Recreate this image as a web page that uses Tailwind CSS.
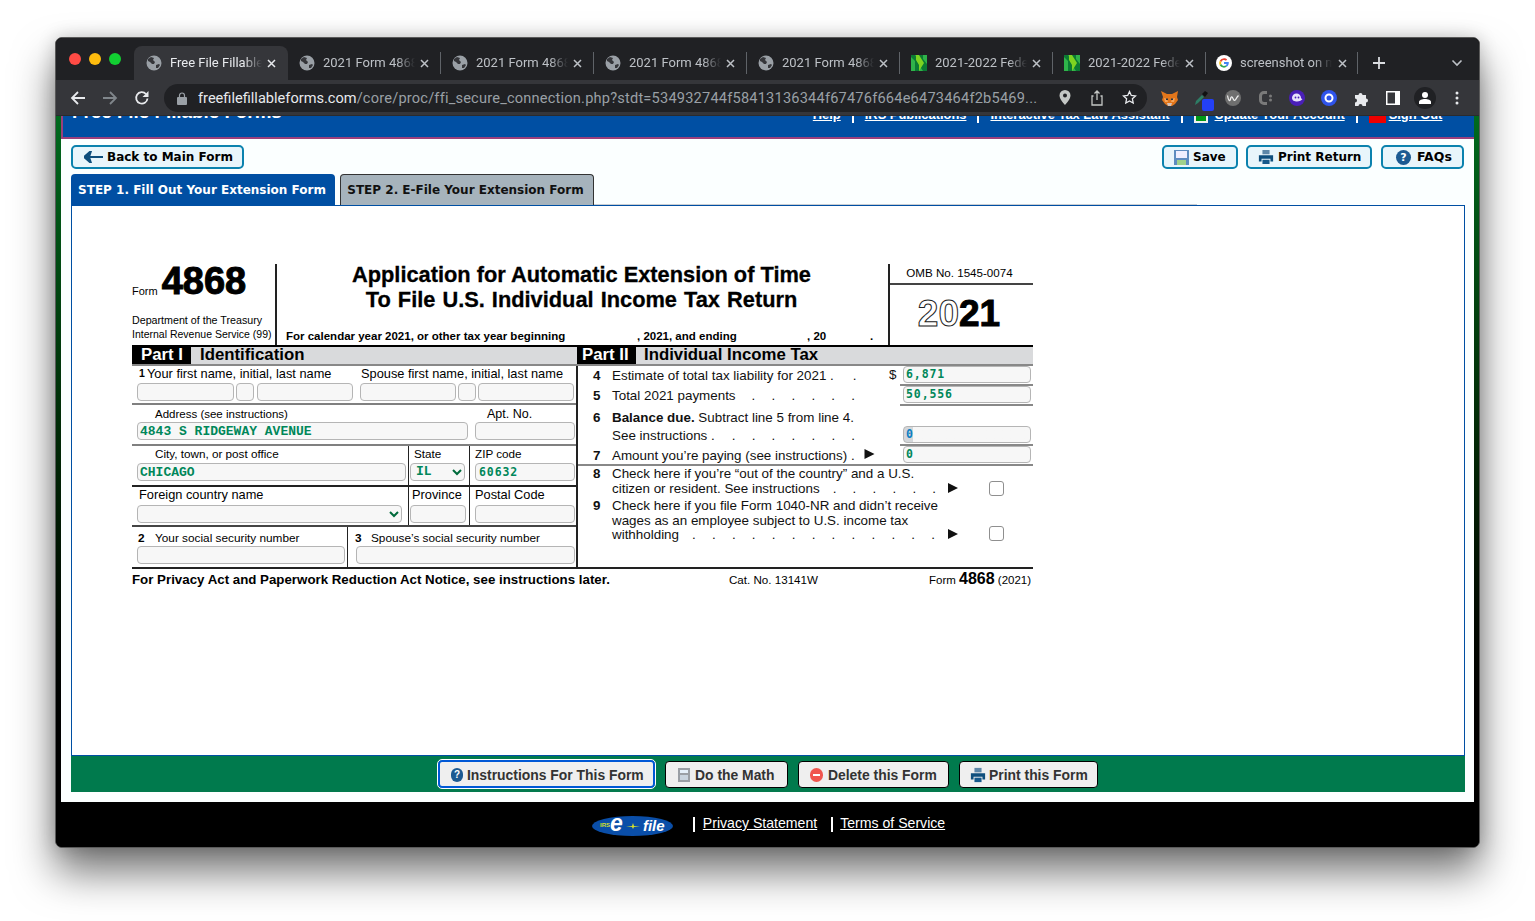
<!DOCTYPE html>
<html lang="en">
  <head>
    <meta charset="UTF-8" />
    <title>Free File Fillable Forms</title>
    <script src="https://cdn.jsdelivr.net/npm/@tailwindcss/browser@4"></script>
  </head>
  <body class="bg-white w-[1535px] h-[921px] overflow-hidden pt-[37px] pl-[55px] font-['Liberation_Sans',Arial,sans-serif] text-black">
    <svg class="hidden">
      <symbol id="globe" viewBox="0 0 16 16">
        <circle cx="8" cy="8" r="7.5" fill="#9aa0a6" />
        <path d="M2 4l3-2 3 1-1 2 2 2-1 2H6L4 7 2 6zM10 10l3-1 1 1-2 3-2 0z" fill="#35363a" />
      </symbol>
      <symbol id="nerd" viewBox="0 0 16 16">
        <rect width="16" height="16" fill="#2fb34a" />
        <path d="M0 0h4l4 6v10H4V6L0 2zM8 0h4v4l4 5v7h-4L8 10z" fill="#0b7a33" />
        <path d="M5 0h3l5 8-5 8V10L5 5z" fill="#7ed321" />
      </symbol>
      <symbol id="printer" viewBox="0 0 18 18">
        <path d="M5 1h8v5H5z" fill="#5d87a8" />
        <path d="M1 7h16v7h-3v-3H4v3H1z" fill="#0f4f7d" />
        <path d="M5 12h8v5H5z" fill="#15598c" />
      </symbol>
      <symbol id="close" viewBox="0 0 9 9">
        <path d="M1 1l7 7M8 1l-7 7" stroke="currentColor" stroke-width="1.500" />
      </symbol>
    </svg>

    <div class="w-[1425px] h-[811px] flex flex-col rounded-[7px] overflow-hidden border border-[#5a5a5a] bg-black shadow-[0_24px_42px_rgba(0,0,0,0.55),0_0_18px_rgba(0,0,0,0.18)]">
      <!-- tab strip -->
      <div class="h-[42px] shrink-0 bg-[#202124] flex items-end text-[13px] text-[#bdc1c6] font-['Roboto',sans-serif]">
        <div class="w-[78px] h-full flex items-start gap-[8px] pl-[13px] pt-[15px]">
          <span class="w-[12px] h-[12px] rounded-full bg-[#ff4b45]"></span>
          <span class="w-[12px] h-[12px] rounded-full bg-[#febc0e]"></span>
          <span class="w-[12px] h-[12px] rounded-full bg-[#12cf32]"></span>
        </div>
        <div class="w-[154px] h-[34px] bg-[#35363a] rounded-t-[8px] flex items-center pl-[12px] text-[#e8eaed]">
          <svg class="w-[16px] h-[16px] shrink-0"><use href="#globe" /></svg>
          <span class="ml-[8px] w-[92px] overflow-hidden whitespace-nowrap [mask-image:linear-gradient(to_right,black_80%,transparent)]">Free File Fillable Forms</span>
          <svg class="ml-[5px] w-[9px] h-[9px]"><use href="#close" /></svg>
        </div>
        <div class="w-[153px] h-[34px] flex items-center pl-[11px] border-r border-[#5f6368] [border-image:linear-gradient(to_bottom,transparent_20%,#5f6368_20%,#5f6368_80%,transparent_80%)_1]">
          <svg class="w-[16px] h-[16px] shrink-0"><use href="#globe" /></svg>
          <span class="ml-[8px] w-[92px] overflow-hidden whitespace-nowrap [mask-image:linear-gradient(to_right,black_80%,transparent)]">2021 Form 4868 Extension</span>
          <svg class="ml-[5px] w-[9px] h-[9px]"><use href="#close" /></svg>
        </div>
        <div class="w-[153px] h-[34px] flex items-center pl-[11px] border-r border-[#5f6368] [border-image:linear-gradient(to_bottom,transparent_20%,#5f6368_20%,#5f6368_80%,transparent_80%)_1]">
          <svg class="w-[16px] h-[16px] shrink-0"><use href="#globe" /></svg>
          <span class="ml-[8px] w-[92px] overflow-hidden whitespace-nowrap [mask-image:linear-gradient(to_right,black_80%,transparent)]">2021 Form 4868 Extension</span>
          <svg class="ml-[5px] w-[9px] h-[9px]"><use href="#close" /></svg>
        </div>
        <div class="w-[153px] h-[34px] flex items-center pl-[11px] border-r border-[#5f6368] [border-image:linear-gradient(to_bottom,transparent_20%,#5f6368_20%,#5f6368_80%,transparent_80%)_1]">
          <svg class="w-[16px] h-[16px] shrink-0"><use href="#globe" /></svg>
          <span class="ml-[8px] w-[92px] overflow-hidden whitespace-nowrap [mask-image:linear-gradient(to_right,black_80%,transparent)]">2021 Form 4868 Extension</span>
          <svg class="ml-[5px] w-[9px] h-[9px]"><use href="#close" /></svg>
        </div>
        <div class="w-[153px] h-[34px] flex items-center pl-[11px] border-r border-[#5f6368] [border-image:linear-gradient(to_bottom,transparent_20%,#5f6368_20%,#5f6368_80%,transparent_80%)_1]">
          <svg class="w-[16px] h-[16px] shrink-0"><use href="#globe" /></svg>
          <span class="ml-[8px] w-[92px] overflow-hidden whitespace-nowrap [mask-image:linear-gradient(to_right,black_80%,transparent)]">2021 Form 4868 Extension</span>
          <svg class="ml-[5px] w-[9px] h-[9px]"><use href="#close" /></svg>
        </div>
        <div class="w-[153px] h-[34px] flex items-center pl-[11px] border-r border-[#5f6368] [border-image:linear-gradient(to_bottom,transparent_20%,#5f6368_20%,#5f6368_80%,transparent_80%)_1]">
          <svg class="w-[16px] h-[16px] shrink-0"><use href="#nerd" /></svg>
          <span class="ml-[8px] w-[92px] overflow-hidden whitespace-nowrap [mask-image:linear-gradient(to_right,black_80%,transparent)]">2021-2022 Federal Tax</span>
          <svg class="ml-[5px] w-[9px] h-[9px]"><use href="#close" /></svg>
        </div>
        <div class="w-[153px] h-[34px] flex items-center pl-[11px] border-r border-[#5f6368] [border-image:linear-gradient(to_bottom,transparent_20%,#5f6368_20%,#5f6368_80%,transparent_80%)_1]">
          <svg class="w-[16px] h-[16px] shrink-0"><use href="#nerd" /></svg>
          <span class="ml-[8px] w-[92px] overflow-hidden whitespace-nowrap [mask-image:linear-gradient(to_right,black_80%,transparent)]">2021-2022 Federal Tax</span>
          <svg class="ml-[5px] w-[9px] h-[9px]"><use href="#close" /></svg>
        </div>
        <div class="w-[152px] h-[34px] flex items-center pl-[10px] border-r border-[#5f6368] [border-image:linear-gradient(to_bottom,transparent_20%,#5f6368_20%,#5f6368_80%,transparent_80%)_1]">
          <svg class="w-[16px] h-[16px] shrink-0" viewBox="0 0 16 16">
            <circle cx="8" cy="8" r="8" fill="#fff" />
            <path d="M8 3.200c1.300 0 2.400.5 3.200 1.300l-1.300 1.300A2.800 2.800 0 0 0 5.300 7L3.700 5.800A4.900 4.900 0 0 1 8 3.200z" fill="#ea4335" />
            <path d="M3.700 5.800 5.300 7a2.800 2.800 0 0 0 0 2L3.700 10.200a4.900 4.900 0 0 1 0-4.400z" fill="#fbbc05" />
            <path d="M3.700 10.200 5.300 9a2.800 2.800 0 0 0 4.200 1.400l1.500 1.200A4.900 4.900 0 0 1 3.700 10.200z" fill="#34a853" />
            <path d="M12.800 8c0-.3 0-.6-.1-.9H8v1.900h2.700c-.1.6-.5 1.100-1.200 1.400l1.500 1.200c.9-.8 1.800-2.100 1.800-3.600z" fill="#4285f4" />
          </svg>
          <span class="ml-[8px] w-[92px] overflow-hidden whitespace-nowrap [mask-image:linear-gradient(to_right,black_80%,transparent)]">screenshot on mac</span>
          <svg class="ml-[6px] w-[9px] h-[9px]"><use href="#close" /></svg>
        </div>
        <div class="flex-1 h-[34px] flex items-center justify-between pl-[15px] pr-[16px]">
          <svg class="w-[12px] h-[12px]" viewBox="0 0 12 12"><path d="M6 0v12M0 6h12" stroke="#dadce0" stroke-width="1.800" /></svg>
          <svg class="w-[12px] h-[8px]" viewBox="0 0 12 8"><path d="M1.500 1.500 6 6l4.500-4.500" stroke="#bdc1c6" stroke-width="1.600" fill="none" /></svg>
        </div>
      </div>

      <!-- toolbar -->
      <div class="h-[36px] shrink-0 bg-[#35363a] border-b border-[#2a2b2e] flex items-center pl-[6px] pt-[1px] text-[#9aa0a6]">
        <div class="w-[32px] flex justify-center">
          <svg class="w-[16px] h-[16px]" viewBox="0 0 16 16"><path d="M15 8H2M8 2 2 8l6 6" stroke="#e8eaed" stroke-width="1.800" fill="none" /></svg>
        </div>
        <div class="w-[32px] flex justify-center">
          <svg class="w-[16px] h-[16px]" viewBox="0 0 16 16"><path d="M1 8h13M8 2l6 6-6 6" stroke="#80868b" stroke-width="1.800" fill="none" /></svg>
        </div>
        <div class="w-[32px] flex justify-center">
          <svg class="w-[16px] h-[16px]" viewBox="0 0 16 16"><path d="M13.500 8.500A5.700 5.700 0 1 1 12 4" stroke="#e8eaed" stroke-width="1.800" fill="none" /><path d="M14.500 1v6h-6z" fill="#e8eaed" /></svg>
        </div>
        <div class="ml-[6px] w-[983px] h-[28px] rounded-full bg-[#202124] flex items-center pl-[13px] pr-[2px]">
          <svg class="w-[10px] h-[13px] shrink-0" viewBox="0 0 10 13"><path d="M2.500 5V3.500a2.500 2.500 0 0 1 5 0V5" stroke="#9aa0a6" stroke-width="1.200" fill="none" /><rect y="5" width="10" height="8" rx="1" fill="#9aa0a6" /></svg>
          <div class="ml-[11px] w-[845px] pt-[2px] whitespace-nowrap overflow-hidden text-[14.600px] tracking-[0.2px] font-['Roboto',sans-serif] text-[#9aa0a6]"><span class="text-[#e8eaed] tracking-normal">freefilefillableforms.com</span>/core/proc/ffi_secure_connection.php?stdt=534932744f58413136344f67476f664e6473464f2b5469...</div>
          <div class="ml-auto flex">
            <div class="w-[32px] flex justify-center">
              <svg class="w-[12px] h-[15px]" viewBox="0 0 12 15"><path fill-rule="evenodd" d="M6 0a5.500 5.500 0 0 1 5.500 5.500C11.500 9.500 6 15 6 15S.5 9.500.5 5.500A5.500 5.500 0 0 1 6 0zm0 3.500a2 2 0 1 0 0 4 2 2 0 0 0 0-4z" fill="#c4c7c5" /></svg>
            </div>
            <div class="w-[32px] flex justify-center">
              <svg class="w-[14px] h-[16px]" viewBox="0 0 14 16"><path d="M3.500 6H2v9h10V6h-1.500M7 10V1M4.500 3.500 7 1l2.500 2.500" stroke="#c4c7c5" stroke-width="1.300" fill="none" /></svg>
            </div>
            <div class="w-[32px] flex justify-center">
              <svg class="w-[15px] h-[15px]" viewBox="0 0 15 15"><path d="m7.500 1.500 1.800 3.900 4.200.5-3.100 2.900.8 4.200-3.700-2.100-3.700 2.100.8-4.200L1.500 5.900l4.200-.5z" stroke="#e8eaed" stroke-width="1.300" fill="none" /></svg>
            </div>
          </div>
        </div>
        <div class="ml-[6px] flex items-center">
          <div class="w-[32px] flex justify-center">
            <svg class="w-[17px] h-[16px]" viewBox="0 0 17 16">
              <path d="M0 1l6 3h5l6-3-1 6 1 3-3 4-3 2H7l-3-2-3-4 1-3z" fill="#e2761b" />
              <path d="M3 8l3 1 1 3-3 0zM14 8l-3 1-1 3 3 0z" fill="#f6a55a" />
              <path d="M6 13h5l-1 3H7z" fill="#d7c1b3" />
              <path d="M5 8.500h2v1.500H5zM10 8.500h2v1.500h-2z" fill="#233447" />
            </svg>
          </div>
          <div class="w-[32px] flex justify-center relative">
            <svg class="w-[16px] h-[16px]" viewBox="0 0 16 16"><path d="M2 15l1-4 6-6 2 2-6 6z" fill="#2d7d65" /><path d="M9 4l3-3 3 2-3 4z" fill="#111" /></svg>
            <span class="absolute left-[17px] top-[9px] w-[12px] h-[12px] rounded-[2px] bg-[#2440f5]"></span>
          </div>
          <div class="w-[32px] flex justify-center">
            <svg class="w-[16px] h-[16px]" viewBox="0 0 16 16"><circle cx="8" cy="8" r="8" fill="#6f6f6f" /><path d="M2.500 5.500c1 6 2.500 6 3 3.500s1.500-3 2.500-.5 2 2.500 3 .5 1.500-2.500 2.500-3.500" stroke="#eee" stroke-width="1.300" fill="none" /></svg>
          </div>
          <div class="w-[32px] flex justify-center">
            <svg class="w-[14px] h-[16px]" viewBox="0 0 14 16"><path d="M9 2.500H6a3.500 3.500 0 0 0-3.500 3.500v4A3.500 3.500 0 0 0 6 13.500h3" stroke="#7a7a7a" stroke-width="3" fill="none" /><circle cx="12.500" cy="6" r="1.500" fill="#7a7a7a" /><circle cx="12.500" cy="10" r="1.500" fill="#7a7a7a" /></svg>
          </div>
          <div class="w-[32px] flex justify-center">
            <svg class="w-[16px] h-[16px]" viewBox="0 0 16 16"><circle cx="8" cy="8" r="8" fill="#4a1fb8" /><path d="M3 8a4.500 4.500 0 0 1 9 0c0 .6 1.500 1 1.500 1-1 1.500-3 2.500-5.500 2.500S3 10.500 3 8z" fill="#e8e3fb" /><circle cx="6.500" cy="7.500" r=".9" fill="#4a1fb8" /><circle cx="9.500" cy="7.500" r=".9" fill="#4a1fb8" /></svg>
          </div>
          <div class="w-[32px] flex justify-center">
            <svg class="w-[16px] h-[16px]" viewBox="0 0 16 16"><circle cx="8" cy="8" r="8" fill="#2f54eb" /><circle cx="8" cy="8" r="3.500" fill="none" stroke="#fff" stroke-width="2" /></svg>
          </div>
          <div class="w-[32px] flex justify-center">
            <svg class="w-[15px] h-[15px]" viewBox="0 0 15 15"><path d="M1 4h3.500a2 2 0 1 1 4 0H12v3.500a2 2 0 1 1 0 4V15H8.500a2 2 0 1 0-4 0H1v-3.500a2 2 0 1 0 0-4z" fill="#e8eaed" /></svg>
          </div>
          <div class="w-[32px] flex justify-center">
            <svg class="w-[14px] h-[14px]" viewBox="0 0 14 14"><path fill-rule="evenodd" d="M0 0h14v14H0zM1.500 1.500v11H9v-11z" fill="#fff" /><path d="M9 1h4v12H9z" fill="#fff" /></svg>
          </div>
          <div class="w-[32px] flex justify-center">
            <span class="w-[22px] h-[22px] rounded-full bg-[#202124] flex items-center justify-center">
              <svg class="w-[12px] h-[12px]" viewBox="0 0 12 12"><circle cx="6" cy="3" r="3" fill="#fff" /><path d="M0 12V10c0-2 3-3 6-3s6 1 6 3v2z" fill="#fff" /></svg>
            </span>
          </div>
          <div class="w-[32px] flex justify-center">
            <svg class="w-[4px] h-[14px]" viewBox="0 0 4 14"><circle cx="2" cy="2" r="1.500" fill="#e8eaed" /><circle cx="2" cy="7" r="1.500" fill="#e8eaed" /><circle cx="2" cy="12" r="1.500" fill="#e8eaed" /></svg>
          </div>
        </div>
      </div>

      <!-- page -->
      <div class="flex-1 min-h-0 flex flex-col bg-linear-to-b from-[#006a1e] to-black to-95%">
        <div class="mx-[5px] h-[686px] shrink-0 bg-[#fbffff] flex flex-col">
          <!-- clipped site banner -->
          <div class="h-[23px] shrink-0 overflow-hidden bg-[#004fa3] border-b-2 border-l-2 border-[#9b3f7c] flex items-end pb-[14px] pl-[9px] text-white">
            <span class="text-[18.800px] leading-[22px] font-bold whitespace-nowrap">Free File Fillable Forms</span>
            <div class="ml-[531px] flex items-end text-[12.900px] leading-[16px] font-bold gap-[11px] whitespace-nowrap">
              <span class="underline">Help</span>
              <span class="w-[2px] h-[14px] bg-white"></span>
              <span class="underline">IRS Publications</span>
              <span class="w-[2px] h-[14px] bg-white"></span>
              <span class="underline">Interactive Tax Law Assistant</span>
              <span class="w-[2px] h-[14px] bg-white"></span>
              <span class="w-[14px] h-[14px] bg-[#009a17] border-2 border-[#eee] -mr-[4px]"></span>
              <span class="underline">Update Your Account</span>
              <span class="w-[2px] h-[14px] bg-white"></span>
              <span class="w-[17px] h-[14px] bg-[#ee0000] -mr-[8px]"></span>
              <span class="underline">Sign Out</span>
            </div>
          </div>

          <!-- action buttons -->
          <div class="h-[24px] mt-[6px] shrink-0 flex px-[10px] font-['DejaVu_Sans',Verdana,sans-serif] font-bold text-[12px]">
            <div class="w-[173px] flex items-center rounded-[5px] border-2 border-[#0b82ae] bg-[#e8f5fb] pl-[11px] gap-[4px]">
              <svg class="w-[19px] h-[12px]" viewBox="0 0 19 12"><path d="M19 6H6M7 0 0 6l7 6 -2-6z" stroke="#0f4f7d" stroke-width="2" fill="#0f4f7d" /></svg>
              <span>Back to Main Form</span>
            </div>
            <div class="ml-auto w-[76px] flex items-center rounded-[5px] border-2 border-[#0b82ae] bg-[#e8f5fb] pl-[10px] gap-[4px]">
              <svg class="w-[15px] h-[15px]" viewBox="0 0 15 15"><rect width="15" height="15" fill="#5d8cc0" /><rect x="2" y="1" width="11" height="7" fill="#eef" /><rect x="3" y="10" width="9" height="5" fill="#9fd18b" /></svg>
              <span>Save</span>
            </div>
            <div class="ml-[8px] w-[126px] flex items-center rounded-[5px] border-2 border-[#0b82ae] bg-[#e8f5fb] pl-[10px] gap-[4px]">
              <svg class="w-[16px] h-[16px]"><use href="#printer" /></svg>
              <span>Print Return</span>
            </div>
            <div class="ml-[9px] w-[83px] flex items-center rounded-[5px] border-2 border-[#0b82ae] bg-[#e8f5fb] pl-[13px] gap-[6px]">
              <span class="w-[15px] h-[15px] rounded-full bg-[#1c5a92] text-white text-[11px] leading-[15px] text-center">?</span>
              <span class="text-[12.500px]">FAQs</span>
            </div>
          </div>

          <!-- step tabs -->
          <div class="h-[31px] mt-[5px] shrink-0 flex pl-[10px] font-['DejaVu_Sans',Verdana,sans-serif] font-bold text-[12px] whitespace-nowrap">
            <div class="w-[264px] rounded-t-[4px] bg-[#004fa3] text-white flex items-center justify-center pr-[2px]">STEP 1. Fill Out Your Extension Form</div>
            <div class="ml-[5px] w-[254px] rounded-t-[4px] bg-[#a6b3bc] text-[#111] border border-b-0 border-[#333] flex items-center justify-center pr-[3px]">STEP 2. E-File Your Extension Form</div>
            <div class="w-[603px] h-[1px] self-end bg-[#c9ced3]"></div>
          </div>

          <!-- form box -->
          <div class="ml-[10px] mr-[9px] h-[551px] shrink-0 border border-[#004fa3] bg-white pt-[58px] pl-[60px]">
            <div class="w-[901px]">
              <!-- form head -->
              <div class="h-[81px] flex">
                <div class="w-[145px] border-r-2 border-[#222] flex flex-col">
                  <div class="h-[34px] flex items-end">
                    <span class="text-[11px] leading-[13px]">Form</span>
                    <span class="ml-[4px] text-[38px] leading-[34px] font-bold [-webkit-text-stroke:1px_black]">4868</span>
                  </div>
                  <div class="mt-[15px] text-[10.700px] leading-[14px] whitespace-nowrap">Department of the Treasury<br /><span class="text-[10.500px]">Internal Revenue Service (99)</span></div>
                </div>
                <div class="flex-1 flex flex-col">
                  <div class="h-[67px] -mt-[2px] pr-[2px] text-center text-[21.800px] leading-[25px] font-bold [-webkit-text-stroke:0.3px_black]">Application for Automatic Extension of Time<br /><span class="[word-spacing:1px]">To File U.S. Individual Income Tax Return</span></div>
                  <div class="flex text-[11.500px] leading-[13px] font-bold pl-[9px] pt-[1px] whitespace-nowrap">
                    <span class="w-[351px]">For calendar year 2021, or other tax year beginning</span>
                    <span class="w-[170px]">, 2021, and ending</span>
                    <span class="w-[63px]">, 20</span>
                    <span>.</span>
                  </div>
                </div>
                <div class="w-[145px] border-l-2 border-[#222] flex flex-col">
                  <div class="h-[21px] border-b-2 border-[#444] text-[11.600px] leading-[17px] text-center pr-[4px] whitespace-nowrap">OMB No. 1545-0074</div>
                  <div class="flex-1 flex justify-center items-start pt-[10px] pr-[5px] text-[37px] leading-[38px] font-bold">
                    <span class="text-white [-webkit-text-stroke:1px_#222]">20</span><span class="[-webkit-text-stroke:1px_black]">21</span>
                  </div>
                </div>
              </div>

              <!-- part bars -->
              <div class="h-[21px] flex border-t-2 border-b-2 border-t-black border-b-[#888] bg-[#d9dadc] text-[16.800px] leading-[15px] font-bold">
                <div class="w-[59px] bg-black text-white text-center pl-[1px]">Part I</div>
                <div class="ml-[9px] w-[377px]">Identification</div>
                <div class="w-[59px] bg-black text-white pl-[5px] whitespace-nowrap">Part II</div>
                <div class="ml-[8px] whitespace-nowrap">Individual Income Tax</div>
              </div>

              <div class="flex h-[203px] border-b-2 border-[#222]">
                <!-- left column -->
                <div class="w-[446px] shrink-0 border-r-2 border-[#222] flex flex-col">
                  <div class="h-[39px] border-b-2 border-[#808080]">
                    <div class="flex h-[17px] pb-[2px] items-center text-[12.800px] leading-[15px] whitespace-nowrap">
                      <span class="w-[15px] pl-[7px] text-[10.500px] font-bold">1</span>
                      <span class="w-[214px]">Your first name, initial, last name</span>
                      <span>Spouse first name, initial, last name</span>
                    </div>
                    <div class="flex pl-[5px] h-[18px]">
                      <input class="w-[97px] h-[18px] rounded-[4px] border border-[#b5b5b5] bg-[#f7f7f7]" />
                      <input class="ml-[2px] w-[18px] h-[18px] rounded-[4px] border border-[#b5b5b5] bg-[#f7f7f7]" />
                      <input class="ml-[3px] w-[96px] h-[18px] rounded-[4px] border border-[#b5b5b5] bg-[#f7f7f7]" />
                      <input class="ml-[7px] w-[96px] h-[18px] rounded-[4px] border border-[#b5b5b5] bg-[#f7f7f7]" />
                      <input class="ml-[2px] w-[18px] h-[18px] rounded-[4px] border border-[#b5b5b5] bg-[#f7f7f7]" />
                      <input class="ml-[2px] w-[96px] h-[18px] rounded-[4px] border border-[#b5b5b5] bg-[#f7f7f7]" />
                    </div>
                  </div>
                  <div class="h-[41px] flex border-b-2 border-[#808080] text-[11.500px] leading-[14px]">
                    <div class="w-[343px] pl-[5px] pt-[2px]">
                      <div class="pl-[18px] h-[15px]">Address (see instructions)</div>
                      <input value="4843 S RIDGEWAY AVENUE" class="w-[331px] h-[18px] rounded-[4px] border border-[#b5b5b5] bg-[#f7f7f7] px-[2px] font-['Liberation_Mono',monospace] font-bold text-[13px] text-[#00875a]" />
                    </div>
                    <div class="pt-[2px]">
                      <div class="pl-[12px] h-[15px] text-[12.500px]">Apt. No.</div>
                      <input class="w-[100px] h-[18px] rounded-[4px] border border-[#b5b5b5] bg-[#f7f7f7]" />
                    </div>
                  </div>
                  <div class="h-[41px] flex border-b-2 border-[#222] text-[11.700px] leading-[14px]">
                    <div class="w-[276px] pl-[5px] pt-[1px]">
                      <div class="pl-[18px] h-[16px]">City, town, or post office</div>
                      <input value="CHICAGO" class="w-[269px] h-[18px] rounded-[4px] border border-[#b5b5b5] bg-[#f7f7f7] px-[2px] font-['Liberation_Mono',monospace] font-bold text-[13px] text-[#00875a]" />
                    </div>
                    <div class="w-[61px] border-l border-[#222] pt-[1px]">
                      <div class="pl-[5px] h-[16px]">State</div>
                      <div class="relative w-[55px] h-[18px] ml-[1px]">
                        <select class="appearance-none w-full h-full rounded-[4px] border border-[#b5b5b5] bg-[#f7f7f7] pl-[5px] font-['Liberation_Mono',monospace] font-bold text-[13px] text-[#00875a]"><option>IL</option></select>
                        <svg class="absolute right-[3px] top-[6px] w-[10px] h-[7px]" viewBox="0 0 10 7"><path d="M1 1l4 4 4-4" stroke="#006b3c" stroke-width="2" fill="none" /></svg>
                      </div>
                    </div>
                    <div class="border-l border-[#222] pl-[5px] pt-[1px]">
                      <div class="h-[16px]">ZIP code</div>
                      <input value="60632" class="w-[100px] h-[18px] rounded-[4px] border border-[#b5b5b5] bg-[#f7f7f7] px-[3px] font-['DejaVu_Sans_Mono',monospace] font-bold text-[11.500px] tracking-[0.9px] text-[#00875a]" />
                    </div>
                  </div>
                  <div class="h-[40px] flex border-b-2 border-[#444] text-[12.800px] leading-[15px]">
                    <div class="w-[276px] pl-[5px]">
                      <div class="pl-[2px] h-[18px] whitespace-nowrap">Foreign country name</div>
                      <div class="relative w-[265px] h-[18px]">
                        <select class="appearance-none w-full h-full rounded-[4px] border border-[#b5b5b5] bg-[#f7f7f7]"><option></option></select>
                        <svg class="absolute right-[3px] top-[6px] w-[10px] h-[7px]" viewBox="0 0 10 7"><path d="M1 1l4 4 4-4" stroke="#006b3c" stroke-width="2" fill="none" /></svg>
                      </div>
                    </div>
                    <div class="w-[61px] border-l border-[#222]">
                      <div class="pl-[3px] h-[18px]">Province</div>
                      <input class="w-[56px] h-[18px] ml-[1px] rounded-[4px] border border-[#b5b5b5] bg-[#f7f7f7]" />
                    </div>
                    <div class="border-l border-[#222] pl-[5px]">
                      <div class="h-[18px] whitespace-nowrap">Postal Code</div>
                      <input class="w-[100px] h-[18px] rounded-[4px] border border-[#b5b5b5] bg-[#f7f7f7]" />
                    </div>
                  </div>
                  <div class="flex-1 flex text-[11.800px] leading-[14px] whitespace-nowrap">
                    <div class="w-[216px] border-r border-[#222] pl-[5px] pt-[4px]">
                      <div class="h-[15px] flex pl-[1px]"><b class="w-[17px]">2</b>Your social security number</div>
                      <input class="w-[208px] h-[18px] rounded-[4px] border border-[#b5b5b5] bg-[#f7f7f7]" />
                    </div>
                    <div class="pl-[7px] pt-[4px]">
                      <div class="h-[15px] flex"><b class="w-[16px]">3</b>Spouse’s social security number</div>
                      <input class="ml-[1px] w-[219px] h-[18px] rounded-[4px] border border-[#b5b5b5] bg-[#f7f7f7]" />
                    </div>
                  </div>
                </div>

                <!-- right column -->
                <div class="flex-1 flex flex-col text-[13.400px] leading-[15px] text-[#111] whitespace-nowrap">
                  <div class="flex h-[20px]">
                    <b class="w-[34px] pl-[15px] pt-[2px]">4</b>
                    <span class="w-[277px] pt-[2px]">Estimate of total tax liability for 2021 .<span class="ml-[19px]">.</span></span>
                    <span class="w-[11px] pt-[1px]">$</span>
                    <div class="w-[133px] h-[20px] border-b-2 border-[#888] pl-[3px]">
                      <input value="6,871" class="w-[128px] h-[17px] rounded-[4px] border border-[#b5b5b5] bg-[#f7f7f7] px-[2px] pb-[1px] font-['DejaVu_Sans_Mono',monospace] font-bold text-[11.500px] tracking-[0.9px] text-[#00875a]" />
                    </div>
                  </div>
                  <div class="flex h-[20px]">
                    <b class="w-[34px] pl-[15px] pt-[2px]">5</b>
                    <span class="w-[288px] pt-[2px]">Total 2021 payments<span class="ml-[16px] [word-spacing:12.500px]">. . . . . .</span></span>
                    <div class="w-[133px] h-[20px] border-b-2 border-[#888] pl-[3px]">
                      <input value="50,556" class="w-[128px] h-[17px] rounded-[4px] border border-[#b5b5b5] bg-[#f7f7f7] px-[2px] pb-[1px] font-['DejaVu_Sans_Mono',monospace] font-bold text-[11.500px] tracking-[0.9px] text-[#00875a]" />
                    </div>
                  </div>
                  <div class="flex h-[40px]">
                    <b class="w-[34px] pl-[15px] pt-[4px]">6</b>
                    <div class="w-[288px] pt-[4px]">
                      <div class="h-[18px]"><b>Balance due.</b> Subtract line 5 from line 4.</div>
                      <div>See instructions .<span class="ml-[17px] [word-spacing:12.500px]">. . . . . . .</span></div>
                    </div>
                    <div class="w-[133px] border-b-2 border-[#888] pl-[3px] pt-[20px]">
                      <input value="0" class="w-[128px] h-[17px] rounded-[4px] border border-[#b5b5b5] bg-linear-to-r from-[#d4d7da] from-7% to-[#f7f7f7] to-7% px-[2px] pb-[1px] font-['DejaVu_Sans_Mono',monospace] font-bold text-[11.500px] text-[#0b7fc2]" />
                    </div>
                  </div>
                  <div class="flex h-[20px] border-b-2 border-[#888]">
                    <b class="w-[34px] pl-[15px] pt-[2px]">7</b>
                    <span class="w-[252px] pt-[2px]">Amount you’re paying (see instructions) .</span>
                    <svg class="w-[11px] h-[10px] mt-[3px]" viewBox="0 0 9 9"><path d="M0 0l9 4.500L0 9z" fill="#111" /></svg>
                    <div class="ml-[25px] pl-[3px] w-[133px]">
                      <input value="0" class="w-[128px] h-[17px] rounded-[4px] border border-[#b5b5b5] bg-[#f7f7f7] px-[2px] pb-[1px] font-['DejaVu_Sans_Mono',monospace] font-bold text-[11.500px] text-[#00875a]" />
                    </div>
                  </div>
                  <div class="flex h-[33px]">
                    <b class="w-[34px] pl-[15px]">8</b>
                    <div class="w-[336px]">
                      Check here if you’re “out of the country” and a U.S.<br />
                      citizen or resident. See instructions<span class="ml-[13px] [word-spacing:12.500px]">. . . . . .</span>
                    </div>
                    <svg class="w-[10px] h-[10px] mt-[17px]" viewBox="0 0 9 9"><path d="M0 0l9 4.500L0 9z" fill="#111" /></svg>
                    <input type="checkbox" class="ml-[31px] mt-[15px] w-[15px] h-[15px] appearance-none rounded-[3px] border border-[#8f8f8f] bg-white" />
                  </div>
                  <div class="flex flex-1 leading-[14.500px]">
                    <b class="w-[34px] pl-[15px]">9</b>
                    <div class="w-[336px]">
                      Check here if you file Form 1040-NR and didn’t receive<br />
                      wages as an employee subject to U.S. income tax<br />
                      withholding<span class="ml-[13px] [word-spacing:12.500px]">. . . . . . . . . . . . .</span>
                    </div>
                    <svg class="w-[10px] h-[10px] mt-[30px]" viewBox="0 0 9 9"><path d="M0 0l9 4.500L0 9z" fill="#111" /></svg>
                    <input type="checkbox" class="ml-[31px] mt-[27px] w-[15px] h-[15px] appearance-none rounded-[3px] border border-[#8f8f8f] bg-white" />
                  </div>
                </div>
              </div>

              <!-- form foot -->
              <div class="flex items-baseline pt-[1px] text-[13.300px] leading-[18px] whitespace-nowrap">
                <b class="w-[597px]">For Privacy Act and Paperwork Reduction Act Notice, see instructions later.</b>
                <span class="w-[200px] text-[11.600px]">Cat. No. 13141W</span>
                <span class="text-[11.500px]">Form <b class="text-[16px]">4868</b> (2021)</span>
              </div>
            </div>
          </div>

          <!-- green action bar -->
          <div class="ml-[10px] mr-[9px] h-[36px] shrink-0 bg-[#007a4d] flex items-center justify-center text-[13.900px] font-bold text-[#333] whitespace-nowrap">
            <div class="w-[217px] h-[28px] flex items-center pl-[11px] pt-[2px] gap-[4px] rounded-[4px] bg-[#efefef] border-2 border-[#0058d6] outline outline-white">
              <span class="w-[12px] h-[14px] rounded-full bg-[#1c5a92] text-white text-[10px] leading-[14px] text-center">?</span>
              <span>Instructions For This Form</span>
            </div>
            <div class="ml-[10px] w-[123px] h-[27px] flex items-center pl-[12px] pt-[2px] gap-[5px] rounded-[4px] bg-[#efefef] border border-black">
              <svg class="w-[12px] h-[14px]" viewBox="0 0 12 14"><rect width="12" height="14" fill="#9a9fa5" /><rect x="2" y="2" width="8" height="3" fill="#e5f0fa" /><rect x="2" y="7" width="8" height="5" fill="#c8d3de" /></svg>
              <span>Do the Math</span>
            </div>
            <div class="ml-[10px] w-[151px] h-[27px] flex items-center pl-[11px] pt-[2px] gap-[5px] rounded-[4px] bg-[#efefef] border border-black">
              <span class="w-[13px] h-[14px] rounded-full bg-[#f0564e] flex items-center justify-center"><span class="w-[7px] h-[2px] bg-white"></span></span>
              <span>Delete this Form</span>
            </div>
            <div class="ml-[10px] w-[139px] h-[27px] flex items-center pl-[10px] pt-[2px] gap-[3px] rounded-[4px] bg-[#efefef] border border-black">
              <svg class="w-[16px] h-[16px]"><use href="#printer" /></svg>
              <span>Print this Form</span>
            </div>
          </div>
          <div class="flex-1"></div>
        </div>

        <!-- footer -->
        <div class="flex-1 flex items-center justify-center pl-[2px] text-[14.100px] text-white">
          <div class="mt-[2px] w-[81px] h-[20px] rounded-[50%] bg-[#0a4ea8] flex items-center justify-center italic font-bold whitespace-nowrap">
            <span class="text-[6px] text-[#d5e02b] not-italic">IRS</span>
            <span class="text-[23px] leading-[17px] -mt-[4px]">e</span>
            <svg class="mx-[3px] w-[14px] h-[6px]" viewBox="0 0 14 6"><path d="M0 3h6l1-3 1 3h6L8 4 7 6 6 4z" fill="#d5e02b" /></svg>
            <span class="text-[15px] leading-[17px]">file</span>
          </div>
          <span class="ml-[20px] w-[2px] h-[15px] bg-white"></span>
          <span class="ml-[8px] -mt-[2px] underline">Privacy Statement</span>
          <span class="ml-[14px] w-[2px] h-[15px] bg-white"></span>
          <span class="ml-[7px] -mt-[2px] underline">Terms of Service</span>
        </div>
      </div>
    </div>
  </body>
</html>
